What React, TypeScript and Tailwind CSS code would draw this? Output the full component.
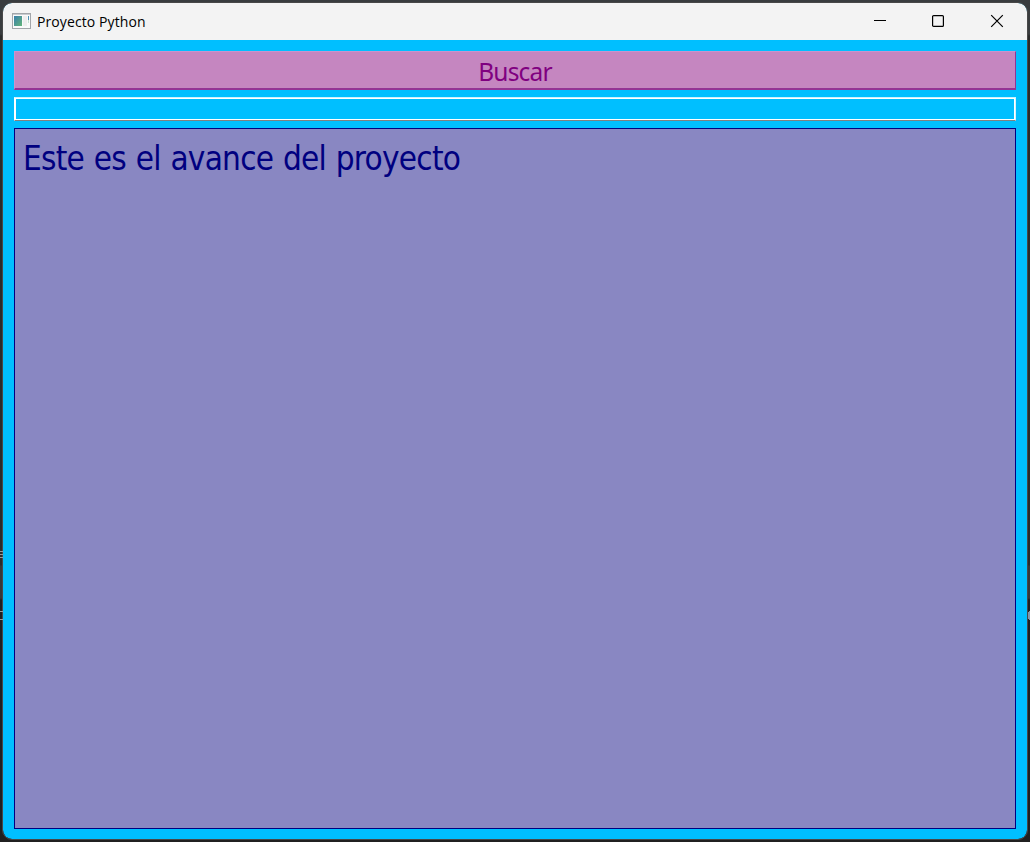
import React from "react";

function AppIcon() {
  return (
    <svg width="20" height="16" viewBox="0 0 20 16" shapeRendering="crispEdges" className="relative -top-px" aria-hidden="true">
      <defs>
        <linearGradient id="pane" x1="0" y1="0" x2="1" y2="1">
          <stop offset="0" stopColor="#397eac" />
          <stop offset="1" stopColor="#63b579" />
        </linearGradient>
      </defs>
      <rect x="0.5" y="0.5" width="18" height="15" fill="#fafafa" stroke="#a3a6aa" />
      <path d="M1 1.5H18" stroke="#c8ccd0" />
      <rect x="2" y="3" width="8" height="10" fill="url(#pane)" />
      <rect x="11" y="3" width="4" height="10" fill="#eeeeee" />
      <rect x="16" y="3" width="1" height="4" fill="#4d91b5" />
      <rect x="16" y="7" width="1" height="3" fill="#c5e0d0" />
    </svg>
  );
}

function TitleBar() {
  return (
    <header className="flex h-[37px] shrink-0 items-center bg-[#f3f3f3] pl-[9px] text-black">
      <AppIcon />
      <h1 className="ml-[5px] grow whitespace-nowrap font-['Open_Sans',sans-serif] text-[14px] leading-5 tracking-[0.1px]">
        Proyecto Python
      </h1>
      <button aria-label="Minimizar" className="flex h-full w-[58px] items-center justify-center pb-[2px]">
        <svg width="14" height="14" viewBox="0 0 14 14" shapeRendering="crispEdges">
          <path d="M1 6.5H13" stroke="#000" />
        </svg>
      </button>
      <button aria-label="Maximizar" className="flex h-full w-[58px] items-center justify-center pb-[2px]">
        <svg width="14" height="14" viewBox="0 0 14 14">
          <rect x="1.6" y="1.6" width="10.8" height="10.8" rx="1" fill="none" stroke="#000" strokeWidth="1.2" />
        </svg>
      </button>
      <button aria-label="Cerrar" className="flex h-full w-[60px] items-center justify-center pb-[2px]">
        <svg width="14" height="14" viewBox="0 0 14 14">
          <path d="M1.2 1.2L12.8 12.8M12.8 1.2L1.2 12.8" stroke="#000" strokeWidth="1.2" />
        </svg>
      </button>
    </header>
  );
}

export default function App() {
  return (
    <div className="relative flex h-[842px] w-[1030px] bg-[linear-gradient(#393c3e_0px,#393c3e_34px,#2b2b2b_36px,#2b2b2b_565px,#383838_566px,#383838_598px,#202020_600px,#202020_842px)] p-[3px]">
      <svg className="absolute left-0 top-[548px]" width="3" height="11" aria-hidden="true">
        <path d="M0 3.5H3M0 6.5H3M0 9.5H3" stroke="#999" />
      </svg>
      <svg className="absolute left-0 top-[610px]" width="3" height="11" aria-hidden="true">
        <path d="M0 1.5H3M0 9.5H3" stroke="#999" />
      </svg>
      <svg className="absolute left-[1028px] top-[611px]" width="2" height="9" aria-hidden="true">
        <path d="M.5 1V8M1.5 0V9" stroke="#8496a8" />
      </svg>
      <main className="flex grow flex-col overflow-hidden rounded-[9px] bg-[#00bfff] outline outline-1 outline-[#484848]">
        <TitleBar />
        <div className="flex grow flex-col pt-[11px] pr-[11px] pb-[10px] pl-[11px]">
          <button className="flex h-[39px] shrink-0 items-center justify-center border border-b-2 border-t-[#c994cd] border-r-[#943494] border-b-[#943494] border-l-[#c994cd] bg-[#c586c0] pt-[4px] font-['Noto_Sans',sans-serif] text-[24.5px] leading-7 tracking-[-0.8px] text-[#800080]">
            Buscar
          </button>
          <div className="mt-[7px] flex h-6 shrink-0 border border-t-[#c8f1ff] border-r-[#d6f3fc] border-b-[#808080] border-l-white">
            <input
              aria-label="Texto"
              className="w-full border border-white bg-transparent outline-none"
            />
          </div>
          <section className="mt-[7px] grow border border-[#000080] bg-[#8987c2] px-[8px] pt-[10px] font-['DejaVu_Sans_Condensed','DejaVu_Sans',sans-serif] text-[33px] leading-10 tracking-[-0.75px] text-[#000080] [word-spacing:1px]">
            <p className="whitespace-nowrap">Este es el avance del proyecto</p>
          </section>
        </div>
      </main>
    </div>
  );
}
